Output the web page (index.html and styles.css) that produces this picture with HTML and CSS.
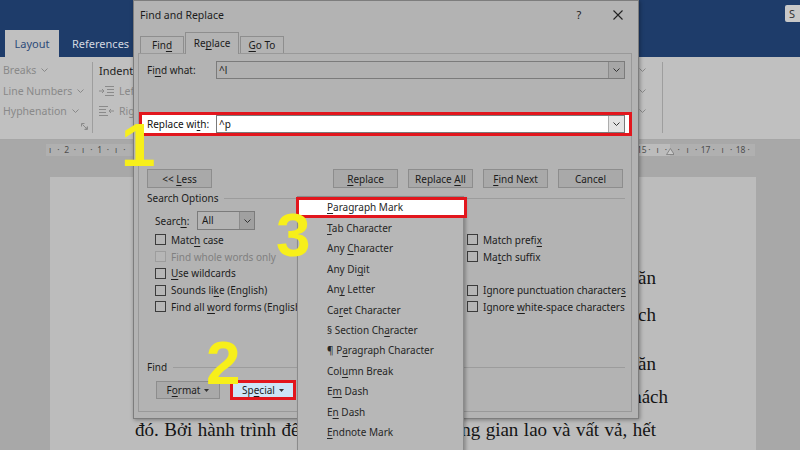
FILE: index.html
```html
<!DOCTYPE html>
<html lang="vi">

<head>
    <meta charset="UTF-8">
    <meta name="viewport" content="width=device-width, initial-scale=1.0">
    <title>Find and Replace</title>
    <link rel="stylesheet" href="styles.css">
</head>

<body>
    <main class="word">
        <header class="topbar">
            <nav class="rtabs">
                <span class="rtab active">Layout</span>
                <span class="rtab">References</span>
            </nav>
            <span class="share">S</span>
        </header>

        <section class="ribbon">
            <div class="group g-setup">
                <div class="ritem">Breaks <svg class="chev" viewBox="0 0 7 4"><polyline points="0.5,0.5 3.5,3.5 6.5,0.5" /></svg></div>
                <div class="ritem">Line Numbers <svg class="chev" viewBox="0 0 7 4"><polyline points="0.5,0.5 3.5,3.5 6.5,0.5" /></svg></div>
                <div class="ritem">Hyphenation <svg class="chev" viewBox="0 0 7 4"><polyline points="0.5,0.5 3.5,3.5 6.5,0.5" /></svg></div>
                <svg class="launcher" viewBox="0 0 7 7"><path d="M0.5 3.5V0.5H3.5M6.5 3.5V6.5H3.5M1.5 1.5L6 6M6 3.8V6H3.8" /></svg>
            </div>
            <span class="rsep"></span>
            <div class="group g-indent">
                <div class="ritem dark">Indent</div>
                <div class="ritem"><svg class="ind" viewBox="0 0 15 12"><path d="M6 1.5H15M8 4.5H15M8 7.5H15M6 10.5H15M0 6H5M3 4L5 6L3 8" /></svg>Left:</div>
                <div class="ritem"><svg class="ind" viewBox="0 0 15 12"><path d="M0 1.5H9M0 4.5H7M0 7.5H7M0 10.5H9M15 6H10M12 4L10 6L12 8" /></svg>Right:</div>
            </div>
            <div class="group g-mid">
                <div class="ritem"><svg class="chev" viewBox="0 0 7 4"><polyline points="0.5,0.5 3.5,3.5 6.5,0.5" /></svg></div>
                <div class="ritem"><svg class="chev" viewBox="0 0 7 4"><polyline points="0.5,0.5 3.5,3.5 6.5,0.5" /></svg></div>
                <div class="ritem"><svg class="chev" viewBox="0 0 7 4"><polyline points="0.5,0.5 3.5,3.5 6.5,0.5" /></svg></div>
            </div>
            <span class="rsep"></span>
            <div class="group g-rest"></div>
        </section>

        <div class="ruler">
            <div class="seg seg-margin seg-left">
                <span class="tk">ı</span><span class="tk">·</span><span class="tk">2</span><span class="tk">·</span><span class="tk">ı</span>
                <span class="tk">·</span><span class="tk">1</span><span class="tk">·</span><span class="tk">ı</span><span class="tk">·</span>
            </div>
            <div class="seg seg-text">
                <span class="tk">15</span><span class="tk">·</span><span class="tk">ı</span><span class="tk">·</span>
            </div>
            <div class="seg seg-margin seg-right">
                <span class="tk marker"><svg viewBox="0 0 11 9"><polygon points="5.5,0.8 10.3,8.3 0.7,8.3" /></svg></span>
                <span class="tk">·</span><span class="tk">ı</span><span class="tk">·</span><span class="tk">17</span>
                <span class="tk">·</span><span class="tk">ı</span><span class="tk">·</span><span class="tk">18</span><span class="tk">·</span>
            </div>
        </div>

        <div class="page">
            <p class="para p1">
                <span class="line">Du lịch bụi là trải nghiệm thú vị nhưng cũng không ít khó khăn</span>
                <span class="line">mà bạn phải vượt qua khi đi một mình như một vị khách</span>
            </p>
            <p class="para p2">
                <span class="line">Những chuyến đi xa luôn mang lại niềm vui dù gặp nhiều khó khăn</span>
                <span class="line over">nhưng vùng đất ấy vẫn luôn thu hút đông đảo du khách</span>
                <span class="line full">đó. Bởi hành trình đến với những con đường gian lao và vất vả, hết</span>
            </p>
        </div>
    </main>

    <div class="dialog">
        <div class="dlg-title">
            <span class="name">Find and Replace</span>
            <span class="help">?</span>
            <span class="close"><svg viewBox="0 0 10 10"><path d="M0.5 0.5L9.5 9.5M9.5 0.5L0.5 9.5" /></svg></span>
        </div>
        <div class="dlg-tabs">
            <span class="dtab">Fin<u>d</u></span>
            <span class="dtab sel">Re<u>p</u>lace</span>
            <span class="dtab"><u>G</u>o To</span>
        </div>
        <div class="panel">
            <div class="field">
                <label>Fi<u>n</u>d what:</label>
                <div class="combo">
                    <span class="val">^l</span>
                    <span class="drop"><svg class="chev" viewBox="0 0 7 4"><polyline points="0.5,0.5 3.5,3.5 6.5,0.5" /></svg></span>
                </div>
            </div>
            <div class="field picked">
                <label>Replace wi<u>t</u>h:</label>
                <div class="combo">
                    <span class="val">^p</span>
                    <span class="drop"><svg class="chev" viewBox="0 0 7 4"><polyline points="0.5,0.5 3.5,3.5 6.5,0.5" /></svg></span>
                </div>
            </div>
            <div class="actions">
                <button class="btn"><span>&lt;&lt; <u>L</u>ess</span></button>
                <button class="btn push"><span><u>R</u>eplace</span></button>
                <button class="btn"><span>Replace <u>A</u>ll</span></button>
                <button class="btn"><span><u>F</u>ind Next</span></button>
                <button class="btn"><span>Cancel</span></button>
            </div>
            <div class="legend"><span>Search Options</span></div>
            <div class="search-row">
                <label>Searc<u>h</u>:</label>
                <div class="combo small">
                    <span class="val">All</span>
                    <span class="drop"><svg class="chev" viewBox="0 0 7 4"><polyline points="0.5,0.5 3.5,3.5 6.5,0.5" /></svg></span>
                </div>
            </div>
            <div class="options">
                <span class="opt"><i class="box"></i><span>Matc<u>h</u> case</span></span>
                <span class="opt"><i class="box"></i><span>Match prefi<u>x</u></span></span>
                <span class="opt off"><i class="box"></i><span>Find whole words only</span></span>
                <span class="opt"><i class="box"></i><span>Ma<u>t</u>ch suffix</span></span>
                <span class="opt"><i class="box"></i><span><u>U</u>se wildcards</span></span>
                <span class="opt"></span>
                <span class="opt"><i class="box"></i><span>Sounds li<u>k</u>e (English)</span></span>
                <span class="opt"><i class="box"></i><span>Ignore punctuation character<u>s</u></span></span>
                <span class="opt"><i class="box"></i><span>Find all <u>w</u>ord forms (English)</span></span>
                <span class="opt"><i class="box"></i><span>Ignore <u>w</u>hite-space characters</span></span>
            </div>
            <div class="legend find-legend"><span>Find</span></div>
            <div class="fmt-row">
                <button class="btn fmt"><span>F<u>o</u>rmat</span><svg class="tri" viewBox="0 0 5 3"><polygon points="0,0 5,0 2.5,3" /></svg></button>
                <button class="btn special"><span>Sp<u>e</u>cial</span><svg class="tri" viewBox="0 0 5 3"><polygon points="0,0 5,0 2.5,3" /></svg></button>
            </div>
        </div>
    </div>

    <ul class="menu">
        <li class="picked"><u>P</u>aragraph Mark</li>
        <li><u>T</u>ab Character</li>
        <li>Any <u>C</u>haracter</li>
        <li>Any Di<u>g</u>it</li>
        <li>An<u>y</u> Letter</li>
        <li>Ca<u>r</u>et Character</li>
        <li>§ Section Ch<u>a</u>racter</li>
        <li>¶ P<u>a</u>ragraph Character</li>
        <li>Col<u>u</u>mn Break</li>
        <li>E<u>m</u> Dash</li>
        <li>E<u>n</u> Dash</li>
        <li><u>E</u>ndnote Mark</li>
        <li class="last">Fiel<u>d</u></li>
    </ul>

    <span class="mark m1">1</span>
    <span class="mark m2">2</span>
    <span class="mark m3">3</span>
</body>

</html>
```

FILE: styles.css
```css
* {
    margin: 0;
    padding: 0;
    box-sizing: border-box;
}

body {
    position: relative;
    width: 800px;
    height: 450px;
    overflow: hidden;
    background-color: #a8a8a8;
    font-family: "Noto Sans", "Open Sans", sans-serif;
    font-size: 10px;
    color: #1c1c1c;
}

u {
    text-decoration-thickness: 1px;
    text-underline-offset: 1.5px;
}

svg {
    display: block;
}

/* word window behind the dialog (dimmed) */
.topbar {
    display: flex;
    justify-content: space-between;
    height: 57px;
    padding-left: 5px;
    background-color: #1e3c6a;
}

.rtabs {
    display: flex;
    align-items: flex-end;
}

.rtab {
    height: 27px;
    line-height: 27px;
    padding-left: 13px;
    font-size: 11px;
    color: #d3d8e0;
}

.rtab.active {
    width: 54px;
    padding: 0;
    text-align: center;
    background-color: #c0c0c0;
    color: #2d4b79;
}

.share {
    width: 22px;
    height: 17px;
    margin-top: 5px;
    margin-right: -7px;
    padding-left: 4px;
    line-height: 17px;
    font-size: 11px;
    color: #333;
    background-color: #c8c8c8;
    border-radius: 2px;
}

.ribbon {
    display: flex;
    height: 83px;
    background-color: #c0c0c0;
    border-bottom: 1px solid #a6a6a6;
    font-size: 10.5px;
    color: #898989;
}

.group {
    display: flex;
    flex-direction: column;
    padding-top: 3px;
}

.g-setup {
    width: 92px;
    padding-left: 3px;
}

.g-indent {
    width: 40px;
    padding-left: 6px;
}

.g-mid {
    flex: 1;
    align-items: flex-end;
    padding-right: 16px;
}

.g-rest {
    width: 137px;
}

.ritem {
    display: flex;
    align-items: center;
    gap: 5px;
    height: 20.5px;
    white-space: nowrap;
}

.ritem.dark {
    font-size: 11px;
    color: #222;
}

.chev {
    width: 7px;
    height: 4px;
    fill: none;
    stroke: currentColor;
    stroke-width: 1;
}

.launcher {
    align-self: flex-end;
    width: 7px;
    height: 7px;
    margin: 1px 4px 0 0;
    fill: none;
    stroke: #8a8a8a;
}

.ind {
    width: 15px;
    height: 12px;
    flex-shrink: 0;
    fill: none;
    stroke: #8a8a8a;
}

.rsep {
    width: 1px;
    margin: 5px 0 6px;
    background-color: #9e9e9e;
}

/* ruler */
.ruler {
    display: flex;
    width: 709px;
    height: 12px;
    margin: 4px 0 0 46px;
    font-size: 8.5px;
    line-height: 12px;
    color: #4e4e4e;
}

.seg {
    display: flex;
}

.seg-margin {
    background-color: #b0b0b0;
}

.seg-left {
    width: 87px;
}

.seg-text {
    flex: 1;
    justify-content: flex-end;
    background-color: #bcbcbc;
}

.seg-right {
    width: 85px;
}

.tk {
    flex-shrink: 0;
    width: 8.25px;
    text-align: center;
}

.seg-right .tk {
    width: 8.75px;
}

.marker {
    display: flex;
    align-items: flex-end;
    justify-content: center;
    margin-left: -4.375px;
}

.marker svg {
    width: 11px;
    height: 9px;
    fill: #c9c9c9;
    stroke: #666;
    stroke-width: 0.8;
}

/* document page */
.page {
    width: 706px;
    height: 273px;
    margin: 21px 0 0 50px;
    padding: 81.5px 100px 0 85px;
    overflow: hidden;
    background-color: #bcbcbc;
    font-family: "Liberation Serif", "DejaVu Serif", serif;
    font-size: 19px;
    color: #141414;
}

.line {
    display: block;
    white-space: nowrap;
    text-align: right;
}

.p1 .line {
    height: 37px;
    line-height: 37px;
}

.p2 {
    margin-top: 14px;
}

.p2 .line {
    height: 33px;
    line-height: 33px;
}

.line.over {
    margin-right: -12px;
}

.line.full {
    white-space: normal;
    text-align: justify;
    text-align-last: justify;
}

/* find and replace dialog */
.dialog {
    position: absolute;
    top: 0;
    left: 133px;
    width: 506px;
    height: 419px;
    display: flex;
    flex-direction: column;
    background-color: #b3b3b3;
    border: 1px solid #7d7d7d;
    box-shadow: 1px 1px 4px rgba(0, 0, 0, 0.35);
}

.dlg-title {
    display: flex;
    align-items: center;
    height: 27px;
    padding: 0 5px 0 6px;
    font-size: 10.5px;
}

.dlg-title .name {
    flex: 1;
}

.help {
    width: 20px;
    margin-right: 14px;
    text-align: center;
    font-size: 11px;
}

.close {
    display: flex;
    align-items: center;
    justify-content: center;
    width: 30px;
}

.close svg {
    width: 10px;
    height: 10px;
    stroke: #222;
    stroke-width: 1.1;
}

.dlg-tabs {
    display: flex;
    align-items: flex-end;
    gap: 1px;
    height: 25px;
    padding-left: 6px;
}

.dtab {
    width: 44px;
    height: 17px;
    line-height: 16px;
    text-align: center;
    border: 1px solid #8e8e8e;
    border-bottom: none;
}

.dtab.sel {
    position: relative;
    z-index: 1;
    width: 54px;
    height: 22px;
    margin-bottom: -1px;
    line-height: 20px;
    background-color: #b3b3b3;
}

.panel {
    display: flex;
    flex-direction: column;
    width: 494px;
    height: 359px;
    margin-left: 4px;
    border: 1px solid #999;
}

.field {
    display: flex;
    align-items: center;
    height: 18px;
    margin-top: 7px;
    padding-left: 8px;
}

.field label {
    width: 69px;
}

.combo {
    display: flex;
    width: 409px;
    height: 18px;
    border: 1px solid #7b7b7b;
    background-color: #b1b1b1;
}

.combo .val {
    flex: 1;
    padding-left: 2px;
    line-height: 16px;
}

.combo .drop {
    display: flex;
    align-items: center;
    justify-content: center;
    width: 16px;
    border-left: 1px solid #8b8b8b;
    background-color: #a6a6a6;
    color: #333;
}

.field.picked {
    height: 24px;
    margin: 33px -1px 0 0;
    padding-left: 5px;
    border: 3px solid #e2161d;
    background-color: #fff;
    color: #111;
}

.field.picked .combo {
    border-color: #7a7a7a;
    background-color: #fff;
}

.field.picked .drop {
    border-left-color: #adadad;
    background-color: #e3e3e3;
}

.actions {
    display: flex;
    gap: 10px;
    height: 19px;
    margin-top: 33px;
    padding: 0 8px;
}

.btn {
    display: flex;
    align-items: center;
    justify-content: center;
    gap: 4px;
    width: 65px;
    height: 19px;
    font-family: inherit;
    font-size: 10px;
    color: #1c1c1c;
    background-color: #a9a9a9;
    border: 1px solid #8d8d8d;
}

.btn.push {
    margin-left: auto;
}

.legend {
    display: flex;
    align-items: center;
    gap: 6px;
    height: 14px;
    margin-top: 3px;
    padding: 0 6px 0 8px;
}

.legend::after {
    content: "";
    flex: 1;
    height: 1px;
    background-color: #9c9c9c;
}

.search-row {
    display: flex;
    align-items: center;
    height: 19px;
    margin-top: 6px;
    padding-left: 16px;
}

.search-row label {
    width: 42px;
}

.combo.small {
    width: 58px;
    height: 19px;
    background-color: #b4b4b4;
}

.combo.small .val {
    padding-left: 4px;
    line-height: 17px;
}

.combo.small .drop {
    width: 15px;
    background-color: #a0a0a0;
}

.options {
    display: grid;
    grid-template-columns: 312px auto;
    grid-auto-rows: 16.75px;
    margin-top: 1.6px;
    padding-left: 16px;
}

.opt {
    display: flex;
    align-items: center;
    gap: 5px;
    white-space: nowrap;
}

.box {
    flex-shrink: 0;
    width: 11px;
    height: 11px;
    border: 1px solid #3b3b3b;
    background-color: #b6b6b6;
}

.opt.off {
    color: #808080;
}

.opt.off .box {
    border-color: #9d9d9d;
}

.find-legend {
    margin-top: 45px;
}

.fmt-row {
    display: flex;
    align-items: center;
    gap: 10px;
    height: 20px;
    margin-top: 6px;
    padding-left: 17px;
}

.fmt {
    width: 64px;
    height: 18px;
}

.special {
    width: 66px;
    height: 20px;
    border: 3px solid #e2161d;
    background-color: #cde5f7;
}

.tri {
    width: 5px;
    height: 3px;
    fill: #333;
}

/* special characters menu */
.menu {
    position: absolute;
    top: 196px;
    left: 297px;
    width: 167px;
    height: 270px;
    list-style: none;
    font-size: 10px;
    color: #262626;
    background-color: #b7b7b7;
    border: 1px solid #8b8b8b;
    box-shadow: 2px 2px 3px rgba(0, 0, 0, 0.25);
}

.menu li {
    height: 20.4px;
    line-height: 20.4px;
    padding-left: 29px;
    white-space: nowrap;
}

.menu li.picked {
    height: 21px;
    line-height: 15px;
    margin: 0 -4px 0 -2px;
    padding-left: 28px;
    border: 3px solid #e2161d;
    background-color: #fff;
}

.menu li.last {
    line-height: 26px;
}

/* step numbers */
.mark {
    position: absolute;
    font-family: "Liberation Sans", Arial, sans-serif;
    font-weight: 700;
    font-size: 62px;
    line-height: 1;
    color: #f7ef1a;
}

.m1 {
    top: 114px;
    left: 121px;
}

.m2 {
    top: 332px;
    left: 206px;
}

.m3 {
    top: 204px;
    left: 276px;
}
```
